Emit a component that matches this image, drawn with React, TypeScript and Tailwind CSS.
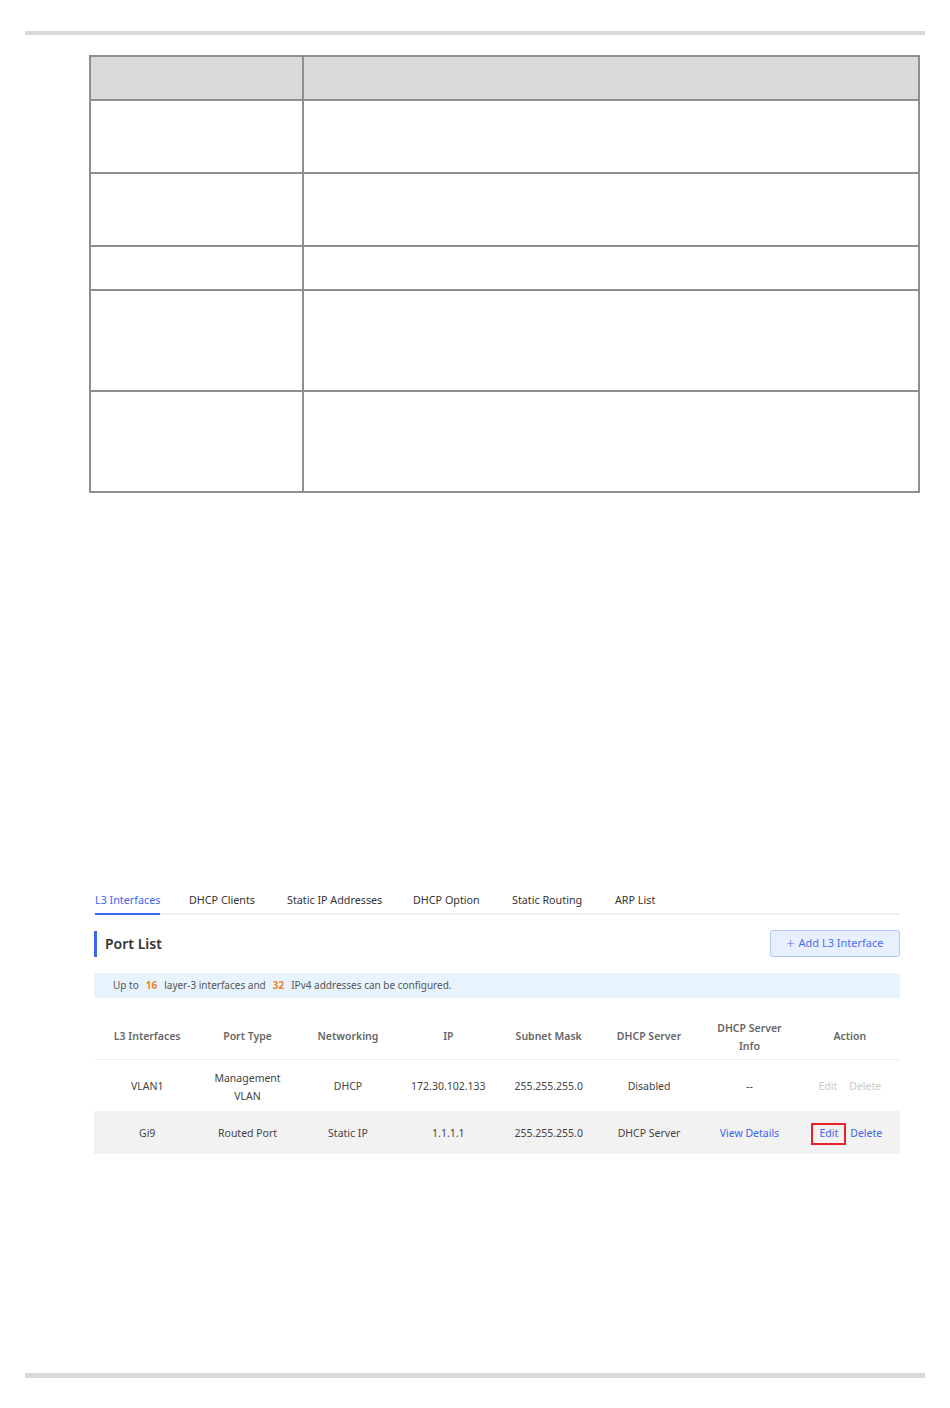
import React from "react";

const tabs = [
  { t: "L3 Interfaces", w: "w-[94px]" },
  { t: "DHCP Clients", w: "w-[98px]" },
  { t: "Static IP Addresses", w: "w-[126px]" },
  { t: "DHCP Option", w: "w-[99px]" },
  { t: "Static Routing", w: "w-[103px]" },
  { t: "ARP List", w: "w-[80px]" },
];

const docRows = ["h-[71px]", "h-[71px]", "h-[42px]", "h-[99px]", "h-[99px]"];

function DocTable() {
  return (
    <div className="ml-[89px] w-[831px] mt-5 border-2 border-[#8f8f8f]">
      <div className="flex h-[42px] bg-[#d9d9d9]">
        <div className="w-[213px] border-r-2 border-[#8f8f8f]" />
        <div className="flex-1" />
      </div>
      {docRows.map((h, i) => (
        <div key={i} className={`flex ${h} border-t-2 border-[#8f8f8f] box-content`}>
          <div className="w-[213px] border-r-2 border-[#8f8f8f]" />
          <div className="flex-1" />
        </div>
      ))}
    </div>
  );
}

const cols = ["L3 Interfaces", "Port Type", "Networking", "IP", "Subnet Mask", "DHCP Server"];

function PortTable() {
  return (
    <div className="mt-4 text-[10.5px] text-[#444]">
      <div className="grid grid-cols-8 h-[46px] items-center border-b border-[#eef0f5] font-semibold text-[#666] pl-[3px]">
        {cols.map((c) => (
          <div key={c} className="text-center">
            {c}
          </div>
        ))}
        <div className="text-center leading-[18px]">
          DHCP Server
          <br />
          Info
        </div>
        <div className="text-center">Action</div>
      </div>
      <div className="grid grid-cols-8 h-[51px] items-center pt-[2px] pl-[3px]">
        <div className="text-center">VLAN1</div>
        <div className="text-center leading-[18px]">
          Management
          <br />
          VLAN
        </div>
        <div className="text-center">DHCP</div>
        <div className="text-center">172.30.102.133</div>
        <div className="text-center">255.255.255.0</div>
        <div className="text-center">Disabled</div>
        <div className="text-center">--</div>
        <div className="flex justify-center gap-3 text-[#c9c9c9]">
          <span>Edit</span>
          <span>Delete</span>
        </div>
      </div>
      <div className="grid grid-cols-8 h-[43px] items-center bg-[#f2f2f2] pt-[2px] pl-[3px]">
        <div className="text-center">Gi9</div>
        <div className="text-center">Routed Port</div>
        <div className="text-center">Static IP</div>
        <div className="text-center">1.1.1.1</div>
        <div className="text-center">255.255.255.0</div>
        <div className="text-center">DHCP Server</div>
        <div className="text-center text-[#3d63f0]">View Details</div>
        <div className="flex justify-center items-center gap-1 text-[#3d63f0] pr-[6px]">
          <span className="border-2 border-[#e8212a] px-[6px] py-[1px]">Edit</span>
          <span>Delete</span>
        </div>
      </div>
    </div>
  );
}

export default function App() {
  return (
    <div className="w-[950px] h-[1408px] bg-white relative" style={{ fontFamily: '"Noto Sans", "Open Sans", sans-serif' }}>
      <div className="pt-[31px]">
        <div className="mx-[25px] h-[4px] bg-[#d9d9d9]" />
      </div>
      <DocTable />

      <div className="mx-[94px] mt-[398px] w-[806px]">
        <div className="flex border-b-2 border-[#eef0f5] text-[10.75px] text-[#333] pt-[1px]">
          {tabs.map((tab, i) => (
            <div key={tab.t} className={`${tab.w} shrink-0 pl-[1px]`}>
              <span
                className={`inline-block pb-[5px] ${i === 0 ? "text-[#3d63f0] border-b-2 border-[#3d63f0] -mb-[2px]" : ""}`}>
                {tab.t}
              </span>
            </div>
          ))}
        </div>

        <div className="flex items-center justify-between mt-[15px]">
          <div className="flex items-center">
            <div className="w-[3px] h-[26px] bg-[#3d63f0]" />
            <div className="ml-2 text-[14px] font-semibold text-[#333]">Port List</div>
          </div>
          <div className="h-[27px] w-[130px] rounded-[3px] border border-[#b4c6f6] bg-[#e8efff] text-[#4b6ff0] text-[11px] flex items-center justify-center gap-1">
            <span className="text-[14px] leading-none font-light">+</span>
            <span>Add L3 Interface</span>
          </div>
        </div>

        <div className="mt-4 h-[25px] rounded-[2px] bg-[#e8f4fd] flex items-center pl-[19px] text-[10px] text-[#555]">
          <span>Up to</span>
          <span className="mx-[7px] font-bold text-[#f0832a]">16</span>
          <span>layer-3 interfaces and</span>
          <span className="mx-[7px] font-bold text-[#f0832a]">32</span>
          <span>IPv4 addresses can be configured.</span>
        </div>

        <PortTable />
      </div>

      <div className="absolute left-[25px] right-[25px] top-[1373px] h-[5px] bg-[#d9d9d9]" />
    </div>
  );
}
